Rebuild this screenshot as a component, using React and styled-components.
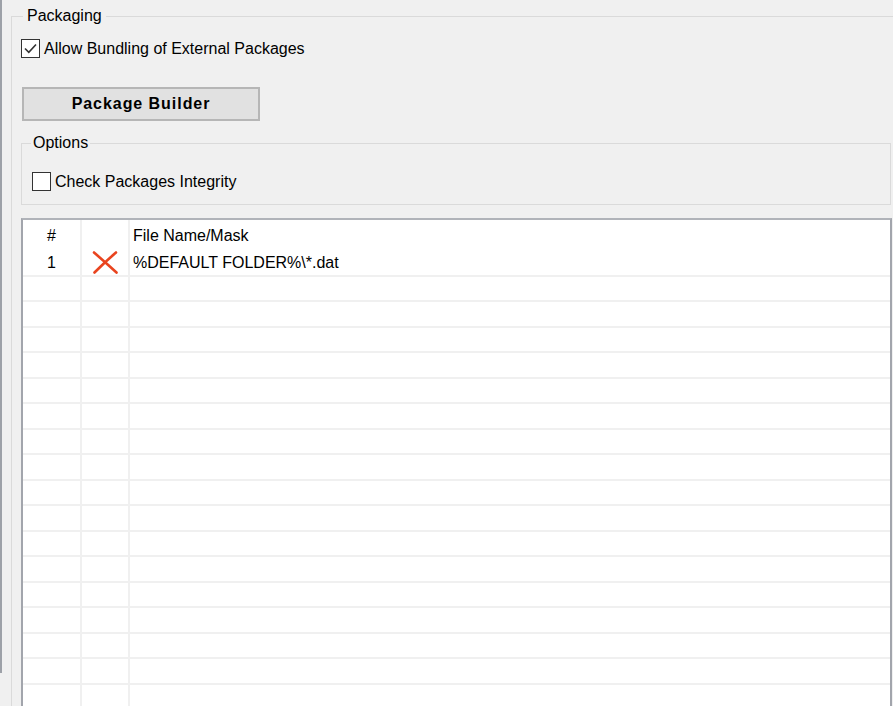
import React from "react";
import styled, { createGlobalStyle } from "styled-components";

const GlobalStyle = createGlobalStyle`
  html, body { margin: 0; padding: 0; background: #f0f0f0; overflow: hidden; }
  body {
    font-family: "Liberation Sans", Arial, sans-serif;
    font-size: 16px;
    color: #000;
  }
  #root { width: 893px; height: 706px; overflow: hidden; }
`;

const Page = styled.div`
  display: flex;
  align-items: flex-start;
  width: 893px;
  height: 706px;
  overflow: hidden;
  background: #f0f0f0;
`;

const EdgeLine = styled.div`
  flex: 0 0 2px;
  height: 673px;
  background: #9da1a8;
`;

const GroupBox = styled.fieldset`
  box-sizing: border-box;
  min-width: 0;
  flex: 0 0 auto;
  border: 1px solid #dadada;
  margin: ${(p) => p.$margin};
  padding: ${(p) => p.$padding};
  width: ${(p) => p.$width || "auto"};
`;

const Legend = styled.legend`
  font-size: 16px;
  line-height: 18px;
  margin-left: ${(p) => p.$offset}px;
  padding: 0 ${(p) => p.$pad}px;
`;

const CheckRow = styled.label`
  display: flex;
  align-items: center;
  gap: 4px;
  margin-top: ${(p) => p.$top}px;
`;

const CheckBox = styled.span`
  box-sizing: border-box;
  width: 19px;
  height: 19px;
  flex: 0 0 19px;
  border: 1px solid #333;
  background: #fff;
  display: flex;
  align-items: center;
  justify-content: center;
`;

const CheckText = styled.span`
  line-height: 18px;
  padding-top: 2px;
`;

const Button = styled.button`
  display: block;
  box-sizing: border-box;
  margin: 29px 0 0 1px;
  width: 238px;
  height: 34px;
  padding: 0;
  border: 2px solid #b6b6b6;
  background: #e1e1e1;
  font-family: inherit;
  font-size: 16px;
  font-weight: bold;
  letter-spacing: 0.95px;
  color: #000;
`;

const Table = styled.div`
  margin-top: 13px;
  border: 2px solid #a2a5ac;
  border-top-color: #b0b3b9;
  background: #fff;
`;

const Row = styled.div`
  display: grid;
  grid-template-columns: 59px 48px 1fr;
  box-sizing: border-box;
  height: ${(p) => p.$h}px;
  border-bottom: ${(p) => (p.$line ? "2px solid #f0f0f0" : "none")};
`;

const Cell = styled.div`
  box-sizing: border-box;
  display: flex;
  align-items: center;
  justify-content: ${(p) => (p.$center ? "center" : "flex-start")};
  padding-left: ${(p) => p.$pl || 0}px;
  border-right: ${(p) => (p.$sep ? "2px solid #f0f0f0" : "none")};
  line-height: 18px;
  white-space: nowrap;
`;

const Check = () => (
  <svg width="15" height="15" viewBox="0 0 15 15">
    <path d="M2 7.5 L5.8 11.3 L13 3.5" fill="none" stroke="#333" strokeWidth="1.6" />
  </svg>
);

const DeleteMark = () => (
  <svg width="26" height="23" viewBox="0 0 26 23">
    <path d="M2 1.5 Q13 11 24.5 21.5" fill="none" stroke="#e9441f" strokeWidth="2.6" strokeLinecap="round" />
    <path d="M24 1.5 Q13 11 2.5 21.5" fill="none" stroke="#e9441f" strokeWidth="2.6" strokeLinecap="round" />
  </svg>
);

const emptyRows = Array.from({ length: 17 }, (_, i) => i);

export default function App() {
  return (
    <>
      <GlobalStyle />
      <Page>
        <EdgeLine />
        <GroupBox $margin="7px 0 0 9px" $padding="0 8px 0 9px" $width="890px">
          <Legend $offset={2} $pad={4}>Packaging</Legend>
          <CheckRow $top={13}>
            <CheckBox><Check /></CheckBox>
            <CheckText>Allow Bundling of External Packages</CheckText>
          </CheckRow>
          <Button>Package Builder</Button>
          <GroupBox $margin="13px 1px 0 0" $padding="0 10px 13px 10px">
            <Legend $offset={-1} $pad={2}>Options</Legend>
            <CheckRow $top={19}>
              <CheckBox />
              <CheckText>Check Packages Integrity</CheckText>
            </CheckRow>
          </GroupBox>
          <Table>
            <Row $h={31}>
              <Cell $center $sep>#</Cell>
              <Cell $sep />
              <Cell $pl={3}>File Name/Mask</Cell>
            </Row>
            <Row $h={25.5} $line>
              <Cell $center $sep>1</Cell>
              <Cell $center $sep><DeleteMark /></Cell>
              <Cell $pl={3}>%DEFAULT FOLDER%\*.dat</Cell>
            </Row>
            {emptyRows.map((i) => (
              <Row key={i} $h={25.5} $line>
                <Cell $sep />
                <Cell $sep />
                <Cell />
              </Row>
            ))}
          </Table>
        </GroupBox>
      </Page>
    </>
  );
}
